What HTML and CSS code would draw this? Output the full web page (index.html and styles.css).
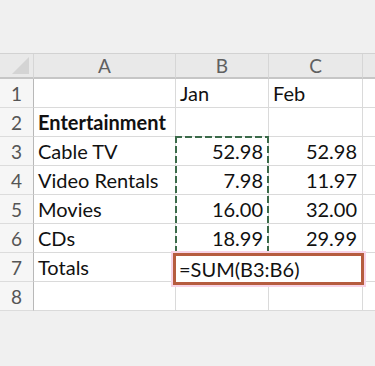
FILE: index.html
```html
<!DOCTYPE html>
<html lang="en">
<head>
    <meta charset="utf-8" />
    <link rel="stylesheet" href="styles.css">
    <title>Entertainment budget</title>
</head>
<body>
    <div class="toolbar"></div>
    <div class="sheet">
        <div class="grid">
            <!-- column headers -->
            <div class="corner"><span class="tri"></span></div>
            <div class="colhead">A</div>
            <div class="colhead">B</div>
            <div class="colhead">C</div>
            <div class="colhead last"></div>

            <div class="rowhead">1</div>
            <div class="cell"></div>
            <div class="cell">Jan</div>
            <div class="cell">Feb</div>
            <div class="cell last"></div>

            <div class="rowhead">2</div>
            <div class="cell bold">Entertainment</div>
            <div class="cell"></div>
            <div class="cell"></div>
            <div class="cell last"></div>

            <div class="rowhead">3</div>
            <div class="cell">Cable TV</div>
            <div class="cell num">52.98</div>
            <div class="cell num">52.98</div>
            <div class="cell last"></div>

            <div class="rowhead">4</div>
            <div class="cell">Video Rentals</div>
            <div class="cell num">7.98</div>
            <div class="cell num">11.97</div>
            <div class="cell last"></div>

            <div class="rowhead">5</div>
            <div class="cell">Movies</div>
            <div class="cell num">16.00</div>
            <div class="cell num">32.00</div>
            <div class="cell last"></div>

            <div class="rowhead">6</div>
            <div class="cell">CDs</div>
            <div class="cell num">18.99</div>
            <div class="cell num">29.99</div>
            <div class="cell last"></div>

            <div class="rowhead">7</div>
            <div class="cell">Totals</div>
            <div class="cell"></div>
            <div class="cell"></div>
            <div class="cell last"></div>

            <div class="rowhead">8</div>
            <div class="cell"></div>
            <div class="cell"></div>
            <div class="cell"></div>
            <div class="cell last"></div>
        </div>

        <!-- copy range marquee and the cell being edited sit on top of the grid -->
        <div class="grid overlay">
            <div class="marquee"></div>
            <div class="editing">=SUM(B3:B6)</div>
        </div>
    </div>
</body>
</html>
```

FILE: styles.css
```css
body {
    margin: 0;
    background-color: #f0f0f0;
    font-family: Lato, 'Liberation Sans', sans-serif;
    color: #111111;
}

.toolbar {
    height: 53px;
}

.sheet {
    position: relative;
    border-top: 1px solid #d2d2d2;
    background-color: #ffffff;
}

.grid {
    display: grid;
    grid-template-columns: 34px 142px 93px 94px 1fr;
    grid-template-rows: 25px repeat(8, 29px);
}

.overlay {
    position: absolute;
    top: 0;
    left: 0;
    right: 0;
    bottom: 0;
    pointer-events: none;
}

.corner, .colhead {
    background-color: #e9e9e9;
    border-bottom: 2px solid #c6c6c6;
    border-right: 1px solid #d6d6d6;
    box-sizing: border-box;
}

.corner {
    position: relative;
}

.corner .tri {
    position: absolute;
    right: 4px;
    bottom: 3px;
    width: 0;
    height: 0;
    border-left: 17px solid transparent;
    border-bottom: 17px solid #d4d4d4;
}

.colhead {
    display: flex;
    justify-content: center;
    align-items: center;
    color: #606060;
    font-size: 19px;
}

.colhead.last, .cell.last {
    border-right: none;
}

.rowhead {
    background-color: #f6f6f6;
    border-right: 1px solid #b8b8b8;
    border-bottom: 1px solid #dcdcdc;
    box-sizing: border-box;
    display: flex;
    justify-content: center;
    align-items: center;
    color: #555555;
    font-size: 19px;
}

.cell {
    border-right: 1px solid #dadada;
    border-bottom: 1px solid #dadada;
    box-sizing: border-box;
    display: flex;
    align-items: center;
    padding: 0 4px;
    font-size: 20px;
    white-space: nowrap;
}

.cell.bold {
    font-weight: bold;
}

.cell.num {
    justify-content: flex-end;
    padding-right: 5px;
}

.marquee {
    grid-column: 3;
    grid-row: 4 / 8;
    margin: -1px 0 0 -1px;
    background:
        repeating-linear-gradient(90deg, #3b6b4a 0 7px, transparent 7px 10px) top left / 100% 2px no-repeat,
        repeating-linear-gradient(90deg, #3b6b4a 0 7px, transparent 7px 10px) bottom left / 100% 2px no-repeat,
        repeating-linear-gradient(180deg, #3b6b4a 0 7px, transparent 7px 10px) top left / 2px 100% no-repeat,
        repeating-linear-gradient(180deg, #3b6b4a 0 7px, transparent 7px 10px) top right / 2px 100% no-repeat;
}

.editing {
    grid-column: 3 / 5;
    grid-row: 8;
    margin: 0 -1px -3px -3px;
    border: 3px solid #b65c3f;
    box-shadow: 0 0 0 2px #f7d3e6;
    display: flex;
    align-items: center;
    padding: 0 3px;
    font-size: 20px;
    color: #111111;
    background-color: #ffffff;
}
```
